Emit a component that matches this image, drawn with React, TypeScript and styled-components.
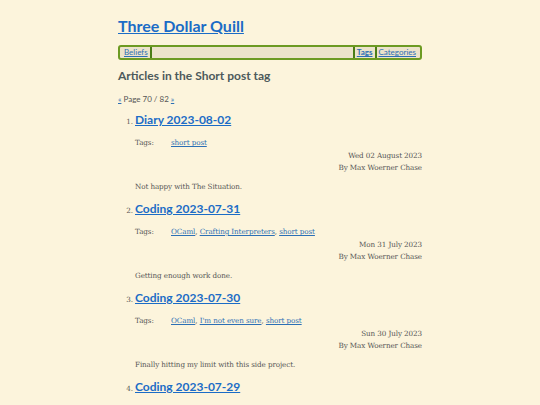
import styled, { createGlobalStyle } from 'styled-components';

const GlobalStyle = createGlobalStyle`
    html, body {
        margin: 0;
        padding: 0;
        background: #fcf4dc;
    }
    body {
        font-family: "DejaVu Serif", serif;
        color: #555;
    }
`;

type Post = {
    title: string;
    tags: string[];
    date: string;
    summary: string;
};

const posts: Post[] = [
    {
        title: 'Diary 2023-08-02',
        tags: ['short post'],
        date: 'Wed 02 August 2023',
        summary: 'Not happy with The Situation.',
    },
    {
        title: 'Coding 2023-07-31',
        tags: ['OCaml', 'Crafting Interpreters', 'short post'],
        date: 'Mon 31 July 2023',
        summary: 'Getting enough work done.',
    },
    {
        title: 'Coding 2023-07-30',
        tags: ['OCaml', "I'm not even sure", 'short post'],
        date: 'Sun 30 July 2023',
        summary: 'Finally hitting my limit with this side project.',
    },
    {
        title: 'Coding 2023-07-29',
        tags: ['OCaml', 'short post'],
        date: 'Sat 29 July 2023',
        summary: 'More work.',
    },
];

export default function App() {
    return (
        <>
            <GlobalStyle />
            <Page>
                <SiteTitle href="#">Three Dollar Quill</SiteTitle>
                <Nav>
                    <NavLink href="#" $divider="right">Beliefs</NavLink>
                    <NavSpacer />
                    <NavLink href="#" $divider="left" $bold>Tags</NavLink>
                    <NavLink href="#" $divider="left">Categories</NavLink>
                </Nav>
                <Heading>Articles in the Short post tag</Heading>
                <Pager>
                    <a href="#">«</a> Page 70 / 82 <a href="#">»</a>
                </Pager>
                <PostList>
                    {posts.map((post) => (
                        <PostItem key={post.title}>
                            <PostTitle href="#">{post.title}</PostTitle>
                            <TagRow>
                                <TagLabel>Tags:</TagLabel>
                                <span>
                                    {post.tags.map((tag, i) => (
                                        <span key={tag}>
                                            <TagLink href="#">{tag}</TagLink>
                                            {i < post.tags.length - 1 ? ', ' : ''}
                                        </span>
                                    ))}
                                </span>
                            </TagRow>
                            <Meta>
                                <div>{post.date}</div>
                                <div>By Max Woerner Chase</div>
                            </Meta>
                            <Summary>{post.summary}</Summary>
                        </PostItem>
                    ))}
                </PostList>
            </Page>
        </>
    );
}

const Page = styled.main`
    width: 304px;
    margin: 0 auto;
    padding-top: 14px;
    display: flex;
    flex-direction: column;
`;

const SiteTitle = styled.a`
    font-family: Lato, "Open Sans", sans-serif;
    font-weight: 700;
    font-size: 16px;
    line-height: 24px;
    color: #1b6cc6;
    text-decoration: underline;
    align-self: flex-start;
`;

const Nav = styled.nav`
    margin-top: 7px;
    height: 11px;
    border: 2px solid #6c9a22;
    border-radius: 3px;
    background: #ece3ca;
    display: flex;
    align-items: stretch;
    padding: 0 2px;
    font-family: Lato, "Open Sans", sans-serif;
    font-size: 8px;
    line-height: 11px;
`;

const NavLink = styled.a<{ $divider: 'left' | 'right'; $bold?: boolean }>`
    color: #2c6fb5;
    font-weight: ${(p) => (p.$bold ? 700 : 400)};
    padding: 0 2px;
    ${(p) => (p.$divider === 'right' ? 'border-right' : 'border-left')}: 2px solid #4b7d16;
`;

const NavSpacer = styled.div`
    flex: 1;
`;

const Heading = styled.h2`
    font-family: Lato, "Open Sans", sans-serif;
    font-weight: 700;
    font-size: 12px;
    line-height: 16px;
    color: #4d5a5b;
    margin: 8px 0 0;
`;

const Pager = styled.p`
    font-family: Lato, "Open Sans", sans-serif;
    font-size: 8px;
    color: #555;
    margin: 10px 0 0;

    a {
        color: #2c6fb5;
    }
`;

const PostList = styled.ol`
    margin: 7px 0 0;
    padding-left: 17px;
    font-family: "DejaVu Serif", serif;
    font-size: 7.2px;
    letter-spacing: -0.1px;

    li::marker {
        font-size: 7.2px;
        color: #555;
    }
`;

const PostItem = styled.li`
    margin-bottom: 7px;
`;

const PostTitle = styled.a`
    font-family: Lato, "Open Sans", sans-serif;
    font-weight: 700;
    font-size: 12px;
    line-height: 18px;
    letter-spacing: 0;
    color: #1b6cc6;
`;

const TagRow = styled.div`
    display: flex;
    margin-top: 9px;
    line-height: 10px;
`;

const TagLabel = styled.span`
    width: 36px;
`;

const TagLink = styled.a`
    color: #2c6fb5;
`;

const Meta = styled.div`
    text-align: right;
    line-height: 12px;
    margin-top: 2px;
    color: #555;
`;

const Summary = styled.p`
    margin: 7px 0 0;
    line-height: 12px;
`;
